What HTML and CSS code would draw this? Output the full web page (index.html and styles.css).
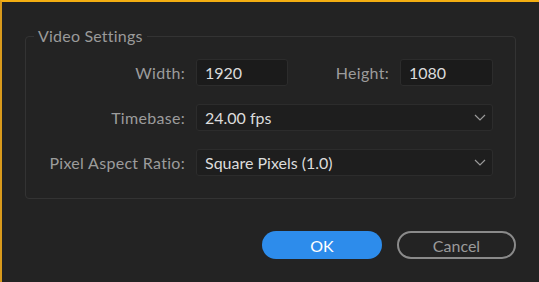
FILE: index.html
```html
<!DOCTYPE html>
<html lang="en">
<head>
  <meta charset="UTF-8">
  <title>Video Settings</title>
  <link rel="stylesheet" href="styles.css">
</head>
<body>
<div class="dialog">
  <fieldset class="group">
    <legend>Video Settings</legend>
    <div class="grid">
      <label class="label" for="width">Width:</label>
      <input class="field" type="text" id="width" value="1920">
      <label class="label" for="height">Height:</label>
      <input class="field" type="text" id="height" value="1080">

      <label class="label">Timebase:</label>
      <div class="select wide">
        <span>24.00 fps</span>
        <svg width="12" height="7" viewBox="0 0 12 7"><path d="M1 1 L6 6 L11 1" fill="none" stroke="#9a9a9a" stroke-width="1.2"/></svg>
      </div>

      <label class="label">Pixel Aspect Ratio:</label>
      <div class="select wide">
        <span>Square Pixels (1.0)</span>
        <svg width="12" height="7" viewBox="0 0 12 7"><path d="M1 1 L6 6 L11 1" fill="none" stroke="#9a9a9a" stroke-width="1.2"/></svg>
      </div>
    </div>
  </fieldset>

  <div class="buttons">
    <button class="btn primary">OK</button>
    <button class="btn secondary">Cancel</button>
  </div>
</div>
</body>
</html>
```

FILE: styles.css
```css
html, body {
  height: 100%;
}

body {
  margin: 0;
  background-color: #232323;
  border-top: 2px solid #f3ae12;
  border-left: 2px solid #d99a1c;
  box-sizing: border-box;
  font-family: Lato, "Noto Sans", sans-serif;
  font-size: 16px;
  color: #9c9c9c;
}

.dialog {
  padding: 25px 23px 0 23px;
}

.group {
  margin: 0;
  padding: 14px 22px 22px 22px;
  border: 1px solid #333;
  border-radius: 4px;
}

.group legend {
  padding: 0 4px;
  margin-left: -14px;
  line-height: 18px;
  color: #9a9a9a;
  letter-spacing: 0.2px;
}

.grid {
  display: grid;
  grid-template-columns: 137px 92px 1fr 93px;
  column-gap: 11px;
  row-gap: 18px;
  align-items: center;
}

.label {
  justify-self: end;
  color: #9c9c9c;
  letter-spacing: 0.3px;
  white-space: nowrap;
}

.field,
.select {
  height: 27px;
  box-sizing: border-box;
  background-color: #1b1b1b;
  border: 1px solid #2c2c2c;
  border-radius: 3px;
  color: #dcdcdc;
  font-family: inherit;
  font-size: 16px;
  padding: 0 8px;
  width: 100%;
  outline: none;
}

.select {
  display: flex;
  align-items: center;
  justify-content: space-between;
  background-color: #1e1e1e;
  padding-right: 6px;
}

.wide {
  grid-column: 2 / span 3;
}

.buttons {
  display: flex;
  justify-content: flex-end;
  gap: 15px;
  margin-top: 32px;
}

.btn {
  width: 120px;
  height: 28px;
  border-radius: 14px;
  font-family: inherit;
  font-size: 16px;
  cursor: pointer;
}

.primary {
  background-color: #2d8ceb;
  border: none;
  color: #fff;
}

.secondary {
  width: 119px;
  background-color: transparent;
  border: 2px solid #8a8a8a;
  color: #9a9a9a;
}
```
